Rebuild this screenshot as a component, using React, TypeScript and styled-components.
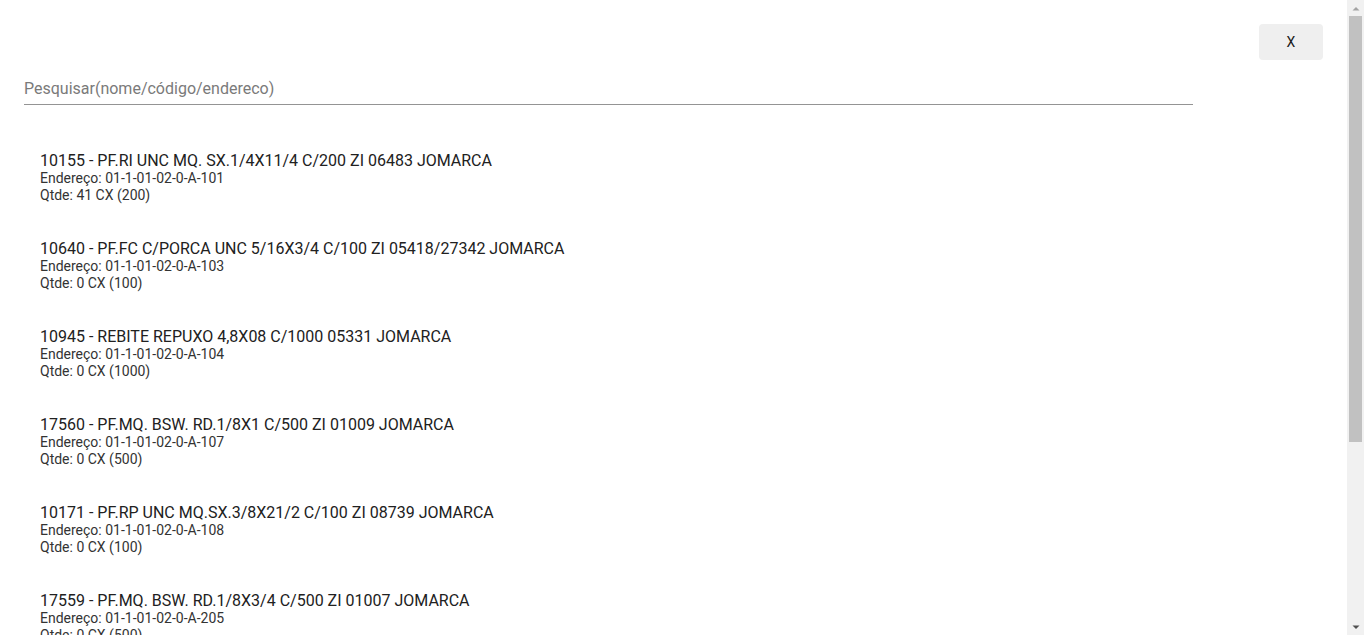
import React from "react";
import styled, { createGlobalStyle } from "styled-components";

const Global = createGlobalStyle`
  html, body { margin: 0; padding: 0; background: #fff; overflow: hidden; }
  body { font-family: Roboto, "Noto Sans", Arial, sans-serif; color: rgba(0,0,0,0.87); }
  * { box-sizing: border-box; }
`;

const Frame = styled.div`
  display: flex;
  height: 100vh;
  width: 100vw;
  overflow: hidden;
`;

const Main = styled.div`
  flex: 1;
  min-width: 0;
  overflow: hidden;
`;

const ScrollBar = styled.div`
  width: 17px;
  flex: none;
  background: #f1f1f1;
  display: flex;
  flex-direction: column;
  align-items: center;
`;

const ArrowBox = styled.div`
  height: 16px;
  width: 100%;
  display: flex;
  align-items: center;
  justify-content: center;
  flex: none;
`;

const Track = styled.div`
  flex: 1;
  width: 100%;
  padding: 0 2px;
`;

const Thumb = styled.div`
  height: 426px;
  width: 100%;
  background: #c1c1c1;
`;

const Page = styled.div`
  padding: 24px 24px 61px 24px;
  display: flex;
  flex-direction: column;
`;

const TopBar = styled.div`
  display: flex;
  justify-content: flex-end;
`;

const CloseButton = styled.button`
  width: 64px;
  height: 36px;
  border: none;
  border-radius: 4px;
  background: #efefef;
  color: #1a1a1a;
  font-family: Roboto, Arial, sans-serif;
  font-size: 14px;
  cursor: pointer;
`;

const SearchInput = styled.input`
  margin-top: 12px;
  width: 1169px;
  height: 33px;
  border: none;
  border-bottom: 1px solid #949494;
  outline: none;
  padding: 4px 0 4px 0;
  font-family: Roboto, Arial, sans-serif;
  font-size: 16px;
  color: #212121;
  background: transparent;
  &::placeholder { color: #7a7a7a; }
`;

const List = styled.ul`
  list-style: none;
  margin: 30px 0 0 0;
  padding: 0;
`;

const Item = styled.li`
  padding: 17px 16px;
  height: 88px;
`;

const Title = styled.div`
  font-size: 16px;
  line-height: 18px;
  color: #212121;
  white-space: nowrap;
`;

const Sub = styled.div`
  font-size: 14px;
  line-height: 17px;
  color: #333;
  white-space: nowrap;
`;

const items = [
  { t: "10155 - PF.RI UNC MQ. SX.1/4X11/4 C/200 ZI 06483 JOMARCA", e: "01-1-01-02-0-A-101", q: "41 CX (200)" },
  { t: "10640 - PF.FC C/PORCA UNC 5/16X3/4 C/100 ZI 05418/27342 JOMARCA", e: "01-1-01-02-0-A-103", q: "0 CX (100)" },
  { t: "10945 - REBITE REPUXO 4,8X08 C/1000 05331 JOMARCA", e: "01-1-01-02-0-A-104", q: "0 CX (1000)" },
  { t: "17560 - PF.MQ. BSW. RD.1/8X1 C/500 ZI 01009 JOMARCA", e: "01-1-01-02-0-A-107", q: "0 CX (500)" },
  { t: "10171 - PF.RP UNC MQ.SX.3/8X21/2 C/100 ZI 08739 JOMARCA", e: "01-1-01-02-0-A-108", q: "0 CX (100)" },
  { t: "17559 - PF.MQ. BSW. RD.1/8X3/4 C/500 ZI 01007 JOMARCA", e: "01-1-01-02-0-A-205", q: "0 CX (500)" },
  { t: "17561 - PF.MQ. BSW. RD.1/8X11/4 C/500 ZI 01010 JOMARCA", e: "01-1-01-02-0-A-206", q: "0 CX (500)" },
  { t: "10158 - PF.RI UNC MQ. SX.1/4X2 C/200 ZI 06487 JOMARCA", e: "01-1-01-02-0-A-207", q: "0 CX (200)" },
];

export default function App() {
  return (
    <>
      <Global />
      <Frame>
        <Main>
          <Page>
            <TopBar>
              <CloseButton>X</CloseButton>
            </TopBar>
            <SearchInput placeholder="Pesquisar(nome/código/endereco)" />
            <List>
              {items.map((it) => (
                <Item key={it.t}>
                  <Title>{it.t}</Title>
                  <Sub>Endereço: {it.e}</Sub>
                  <Sub>Qtde: {it.q}</Sub>
                </Item>
              ))}
            </List>
          </Page>
        </Main>
        <ScrollBar>
          <ArrowBox>
            <svg width="8" height="5" viewBox="0 0 8 5"><path d="M0.5 4.5 L4 1 L7.5 4.5 Z" fill="#a3a3a3" /></svg>
          </ArrowBox>
          <Track>
            <Thumb />
          </Track>
          <ArrowBox>
            <svg width="8" height="5" viewBox="0 0 8 5"><path d="M0.5 0.5 L7.5 0.5 L4 4 Z" fill="#505050" /></svg>
          </ArrowBox>
        </ScrollBar>
      </Frame>
    </>
  );
}
